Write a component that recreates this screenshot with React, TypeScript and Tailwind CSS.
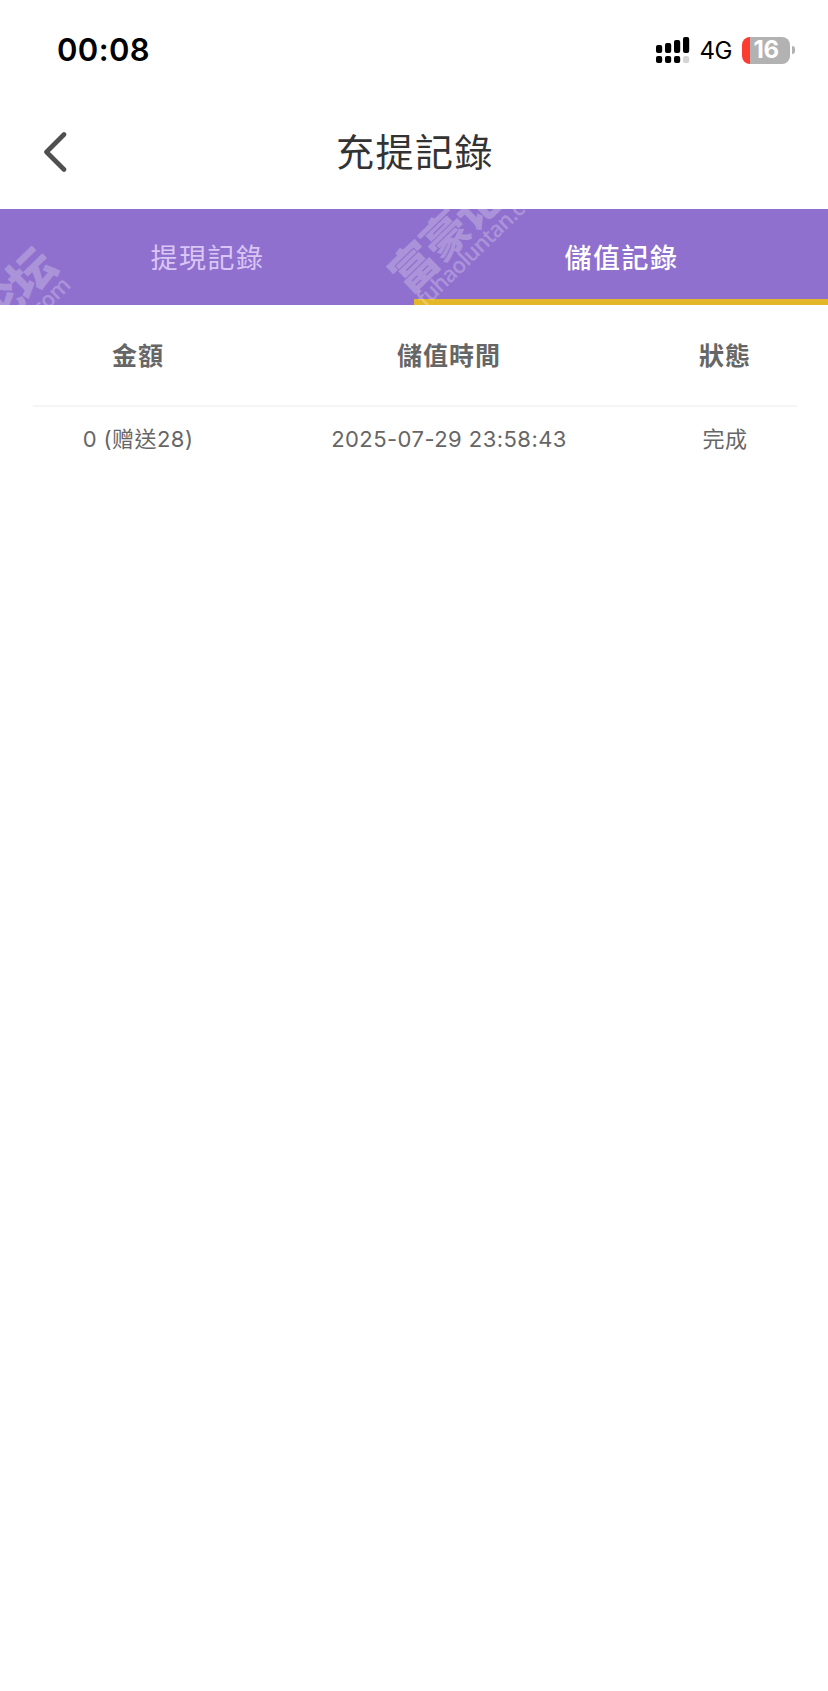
import { useState } from 'react';

interface RecordItem {
  id: number;
  amount: string;
  time: string;
  status: string;
}

const tabs = [
  { id: 'withdraw', label: '提現記錄' },
  { id: 'deposit', label: '儲值記錄' },
];

const records: RecordItem[] = [
  { id: 1, amount: '0 (赠送28)', time: '2025-07-29 23:58:43', status: '完成' },
];

function SignalIcon() {
  return (
    <svg width="34" height="28" viewBox="0 0 34 28" className="shrink-0">
      <rect x="0" y="9" width="6.2" height="8" rx="2" />
      <rect x="9" y="7" width="6.2" height="10" rx="2" />
      <rect x="18" y="4" width="6.2" height="13" rx="2" />
      <rect x="27" y="1" width="6.2" height="16" rx="2" />
      <rect x="0" y="20" width="6.2" height="7" rx="2" />
      <rect x="9" y="20" width="6.2" height="7" rx="2" />
      <rect x="18" y="20" width="6.2" height="7" rx="2" />
      <rect x="27" y="20" width="6.2" height="7" rx="2" fill="#d4d4d4" />
    </svg>
  );
}

function StatusBar() {
  return (
    <div className="flex h-[100px] items-center justify-between pr-[33px] pl-[57px] text-black">
      <span className="pt-[1px] text-[31px] font-semibold tracking-[0.4px]">00:08</span>
      <div className="flex items-center">
        <SignalIcon />
        <span className="mt-[2px] ml-[9px] text-[24px] tracking-[-0.4px]">4G</span>
        <div className="ml-[10px] flex h-[27px] w-[48px] items-center justify-center overflow-hidden rounded-[8px] bg-linear-to-r from-[#fb3b30] from-[8px] to-[#b2b2b2] to-[8px]">
          <span className="text-[24px] font-bold tracking-[-0.5px] text-white">16</span>
        </div>
        <div className="ml-[2px] h-[8px] w-[3px] rounded-r-full bg-[#b2b2b2]" />
      </div>
    </div>
  );
}

function Watermark({ className }: { className: string }) {
  return (
    <div className={`pointer-events-none absolute origin-top-left -rotate-[44deg] whitespace-nowrap text-white/25 ${className}`}>
      <div className="text-[46px] leading-[46px] font-black tracking-[-1.5px]">富豪论坛</div>
      <div className="-mt-[6px] ml-[3px] font-['Open_Sans',sans-serif] text-[22px] leading-[24px] font-semibold tracking-[-0.7px]">fuhaoluntan.com</div>
    </div>
  );
}

export default function App() {
  const [activeTab, setActiveTab] = useState('deposit');

  return (
    <div className="min-h-[1691px] bg-white font-['Inter','Noto_Sans_CJK_TC',sans-serif]">
      <StatusBar />

      <header className="grid h-[109px] grid-cols-[1fr_auto_1fr] items-center pb-[5px]">
        <button className="ml-[43px] w-6" aria-label="返回">
          <svg width="24" height="42" viewBox="0 0 24 42" fill="none" stroke="#505050" strokeWidth="4.6" strokeLinecap="round" strokeLinejoin="round">
            <path d="M21 3.5 3.5 21 21 38.5" />
          </svg>
        </button>
        <h1 className="pl-[2px] text-[38px] tracking-[1.5px] text-[#333]">充提記錄</h1>
      </header>

      {/* Tabs */}
      <nav className="relative flex h-24 overflow-hidden bg-[#9070ce]">
        {tabs.map(({ id, label }) => (
          <button
            key={id}
            onClick={() => setActiveTab(id)}
            className={`flex-1 border-b-[6px] pt-[10px] pl-[1px] text-[27px] tracking-[1.5px] ${activeTab === id ? 'border-[#e4b72b] font-medium text-white' : 'border-transparent text-[#d9c6f5]'}`}
          >
            {label}
          </button>
        ))}
        <Watermark className="top-[57px] left-[381px]" />
        <Watermark className="top-[156px] left-[-97px]" />
      </nav>

      {/* Records */}
      <div className="pr-[31px] pl-[33px] text-center text-[#666]">
        <div className="grid h-[102px] grid-cols-[210px_412px_140px] items-center border-b-2 border-[#f5f5f5] pt-[4px] text-[25px] font-bold tracking-[1px]">
          <span>金額</span>
          <span>儲值時間</span>
          <span>狀態</span>
        </div>
        {records.map(item => (
          <div key={item.id} className="grid h-16 grid-cols-[210px_412px_140px] items-center text-[22px] tracking-[0.45px]">
            <span>{item.amount}</span>
            <span>{item.time}</span>
            <span>{item.status}</span>
          </div>
        ))}
      </div>
    </div>
  );
}
